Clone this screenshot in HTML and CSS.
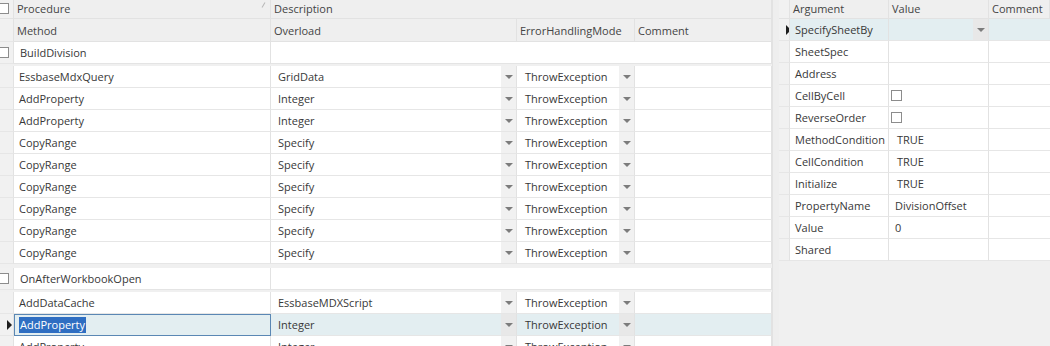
FILE: index.html
```html
<!DOCTYPE html>
<html>
<head>
<meta charset="utf-8">
<link rel="stylesheet" href="styles.css">
</head>
<body>
<div class="app">
  <div class="lpane">
    <div class="hrow1">
      <div class="ind"><span class="cb cut"></span></div>
      <div class="hcell proc">Procedure<span class="sortmark"></span></div>
      <div class="hcell">Description</div>
    </div>
    <div class="lrow hrow2">
      <div class="ind"></div>
      <div class="hcell">Method</div>
      <div class="hcell">Overload</div>
      <div class="hcell">ErrorHandlingMode</div>
      <div class="hcell">Comment</div>
    </div>

    <div class="grow">
      <div class="ind"><span class="cb cut"></span></div>
      <div class="gcell">BuildDivision</div>
      <div class="gcell"></div>
    </div>
    <div class="block">
      <div class="lrow"><div class="ind"></div><div class="cell m">EssbaseMdxQuery</div><div class="cell dd"><span class="t">GridData</span><span class="btn"></span></div><div class="cell dd e"><span class="t">ThrowException</span><span class="btn"></span></div><div class="cell"></div></div>
      <div class="lrow"><div class="ind"></div><div class="cell m">AddProperty</div><div class="cell dd"><span class="t">Integer</span><span class="btn"></span></div><div class="cell dd e"><span class="t">ThrowException</span><span class="btn"></span></div><div class="cell"></div></div>
      <div class="lrow"><div class="ind"></div><div class="cell m">AddProperty</div><div class="cell dd"><span class="t">Integer</span><span class="btn"></span></div><div class="cell dd e"><span class="t">ThrowException</span><span class="btn"></span></div><div class="cell"></div></div>
      <div class="lrow"><div class="ind"></div><div class="cell m">CopyRange</div><div class="cell dd"><span class="t">Specify</span><span class="btn"></span></div><div class="cell dd e"><span class="t">ThrowException</span><span class="btn"></span></div><div class="cell"></div></div>
      <div class="lrow"><div class="ind"></div><div class="cell m">CopyRange</div><div class="cell dd"><span class="t">Specify</span><span class="btn"></span></div><div class="cell dd e"><span class="t">ThrowException</span><span class="btn"></span></div><div class="cell"></div></div>
      <div class="lrow"><div class="ind"></div><div class="cell m">CopyRange</div><div class="cell dd"><span class="t">Specify</span><span class="btn"></span></div><div class="cell dd e"><span class="t">ThrowException</span><span class="btn"></span></div><div class="cell"></div></div>
      <div class="lrow"><div class="ind"></div><div class="cell m">CopyRange</div><div class="cell dd"><span class="t">Specify</span><span class="btn"></span></div><div class="cell dd e"><span class="t">ThrowException</span><span class="btn"></span></div><div class="cell"></div></div>
      <div class="lrow"><div class="ind"></div><div class="cell m">CopyRange</div><div class="cell dd"><span class="t">Specify</span><span class="btn"></span></div><div class="cell dd e"><span class="t">ThrowException</span><span class="btn"></span></div><div class="cell"></div></div>
      <div class="lrow"><div class="ind"></div><div class="cell m">CopyRange</div><div class="cell dd"><span class="t">Specify</span><span class="btn"></span></div><div class="cell dd e"><span class="t">ThrowException</span><span class="btn"></span></div><div class="cell"></div></div>
    </div>

    <div class="grow">
      <div class="ind"><span class="cb cut"></span></div>
      <div class="gcell">OnAfterWorkbookOpen</div>
      <div class="gcell"></div>
    </div>
    <div class="block">
      <div class="lrow"><div class="ind"></div><div class="cell m">AddDataCache</div><div class="cell dd"><span class="t">EssbaseMDXScript</span><span class="btn"></span></div><div class="cell dd e"><span class="t">ThrowException</span><span class="btn"></span></div><div class="cell"></div></div>
      <div class="lrow sel"><div class="ind"><span class="arrow"></span></div><div class="cell m focus"><span class="hl">AddProperty</span></div><div class="cell dd"><span class="t">Integer</span><span class="btn"></span></div><div class="cell dd e"><span class="t">ThrowException</span><span class="btn"></span></div><div class="cell"></div></div>
      <div class="lrow"><div class="ind"></div><div class="cell m">AddProperty</div><div class="cell dd"><span class="t">Integer</span><span class="btn"></span></div><div class="cell dd e"><span class="t">ThrowException</span><span class="btn"></span></div><div class="cell"></div></div>
    </div>
  </div>

  <div class="split"></div>

  <div class="rpane">
    <div class="rrow rhead">
      <div class="ind"></div>
      <div class="hcell">Argument</div>
      <div class="hcell">Value</div>
      <div class="hcell">Comment</div>
    </div>
    <div class="rrow sel"><div class="ind"><span class="arrow"></span></div><div class="cell a">SpecifySheetBy</div><div class="cell dd"><span class="t"></span><span class="btn"></span></div><div class="cell"></div></div>
    <div class="rrow"><div class="ind"></div><div class="cell a">SheetSpec</div><div class="cell v"></div><div class="cell"></div></div>
    <div class="rrow"><div class="ind"></div><div class="cell a">Address</div><div class="cell v"></div><div class="cell"></div></div>
    <div class="rrow"><div class="ind"></div><div class="cell a">CellByCell</div><div class="cell vc"><span class="cb"></span></div><div class="cell"></div></div>
    <div class="rrow"><div class="ind"></div><div class="cell a">ReverseOrder</div><div class="cell vc"><span class="cb"></span></div><div class="cell"></div></div>
    <div class="rrow"><div class="ind"></div><div class="cell a">MethodCondition</div><div class="cell vt">TRUE</div><div class="cell"></div></div>
    <div class="rrow"><div class="ind"></div><div class="cell a">CellCondition</div><div class="cell vt">TRUE</div><div class="cell"></div></div>
    <div class="rrow"><div class="ind"></div><div class="cell a">Initialize</div><div class="cell vt">TRUE</div><div class="cell"></div></div>
    <div class="rrow"><div class="ind"></div><div class="cell a">PropertyName</div><div class="cell v">DivisionOffset</div><div class="cell"></div></div>
    <div class="rrow"><div class="ind"></div><div class="cell a">Value</div><div class="cell v">0</div><div class="cell"></div></div>
    <div class="rrow"><div class="ind"></div><div class="cell a">Shared</div><div class="cell v"></div><div class="cell"></div></div>
  </div>
</div>
</body>
</html>
```

FILE: styles.css
```css
* { box-sizing: border-box; }
html, body { margin: 0; padding: 0; }
body {
  width: 1050px;
  height: 346px;
  overflow: hidden;
  background: #f0f0f0;
  font-family: "Open Sans", "Noto Sans", "DejaVu Sans", sans-serif;
  font-size: 11px;
  color: #383838;
}
.app { display: flex; height: 346px; overflow: hidden; }

.lpane { width: 773px; flex: none; background: #f0f0f0; border-right: 1px solid #e2e2e2; }
.split { width: 6px; flex: none; background: #eeeeee; }
.rpane { flex: 1; background: #f0f0f0; }

.ind {
  background: #f1f1f1;
  border-right: 1px solid #e2e2e2;
  border-bottom: 1px solid #e6e6e6;
  display: flex;
  align-items: center;
  overflow: hidden;
}
.cb {
  display: inline-block;
  width: 11px;
  height: 11px;
  border: 1px solid #8c8c8c;
  background: #fff;
  flex: none;
}
.cb.cut { margin-left: -2px; }
.arrow {
  width: 0; height: 0;
  border-top: 5px solid transparent;
  border-bottom: 5px solid transparent;
  border-left: 5px solid #1e1e1e;
  margin-left: 7px;
}

.hrow1 {
  display: grid;
  grid-template-columns: 14px 257px 1fr;
  height: 19px;
  background: #efefef;
}
.hrow1 .ind { border-bottom: 1px solid #e2e2e2; padding-bottom: 2px; }
.hrow1 .hcell, .rhead .hcell { padding-bottom: 2px; }
.hcell {
  background: #efefef;
  border-right: 1px solid #e2e2e2;
  border-bottom: 1px solid #e2e2e2;
  padding-left: 3px;
  display: flex;
  align-items: center;
  color: #444;
  white-space: nowrap;
  overflow: hidden;
}
.hcell.proc { justify-content: space-between; padding-right: 6px; }
.sortmark {
  width: 1px; height: 6px;
  background: #b8b8b8;
  transform: rotate(30deg);
  margin-top: -7px;
}

.lrow {
  display: grid;
  grid-template-columns: 14px 257px 246px 118px 1fr;
  height: 22px;
}
.hrow2 { height: 23px; }

.grow {
  display: grid;
  grid-template-columns: 14px 257px 1fr;
  height: 22px;
  margin-bottom: 2px;
}
.block { margin-bottom: 4px; }
.gcell {
  background: #fff;
  border-right: 1px solid #e2e2e2;
  border-bottom: 1px solid #e4e4e4;
  padding-left: 6px;
  display: flex;
  align-items: center;
  white-space: nowrap;
}

.cell {
  background: #fff;
  border-right: 1px solid #e2e2e2;
  border-bottom: 1px solid #e6e6e6;
  display: flex;
  align-items: center;
  white-space: nowrap;
  overflow: hidden;
}
.cell.m { padding-left: 5px; }
.cell.dd { padding-left: 7px; }
.cell.dd.e { padding-left: 8px; }
.cell.dd .t { flex: 1; }
.btn {
  width: 15px;
  align-self: stretch;
  background: #f1f1f1;
  display: flex;
  align-items: center;
  justify-content: center;
}
.btn::after {
  content: "";
  width: 0; height: 0;
  border-left: 4px solid transparent;
  border-right: 4px solid transparent;
  border-top: 4px solid #7c7c7c;
  margin-top: 1px;
}
.sel .cell { background: #e3eef1; }
.sel .btn { background: #e8e8e8; }
.cell.focus {
  border: 1px solid #5a87b4;
  padding-left: 4px;
}
.hl { background: #2f6ec2; color: #fff; padding: 0 1px 1px 1px; }

.rrow {
  display: grid;
  grid-template-columns: 11px 99px 100px 1fr;
  height: 22px;
}
.rhead { height: 19px; }
.rhead .ind { border-bottom: 1px solid #e2e2e2; }
.cell.a { padding-left: 5px; }
.cell.v { padding-left: 6px; }
.cell.vt { padding-left: 8px; }
.cell.vc { padding-left: 2px; }
.rrow.sel .cell.dd { padding-left: 0; }
.rrow .cell:last-child { border-right: none; }
```
